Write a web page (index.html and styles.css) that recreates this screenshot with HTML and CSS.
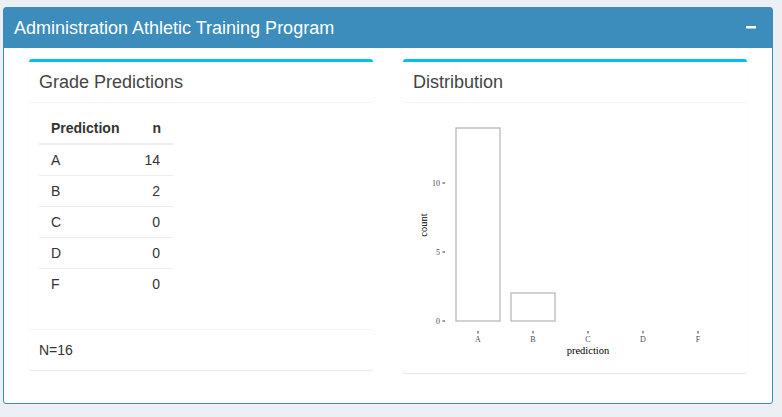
FILE: index.html
```html
<!DOCTYPE html>
<html>
<head>
<meta charset="utf-8">
<link rel="stylesheet" href="styles.css">
</head>
<body>
<div class="box">
  <div class="box-header">
    <h3 class="box-title">Administration Athletic Training Program</h3>
    <span class="box-tool"><svg width="10" height="3" viewBox="0 0 10 3"><rect x="0" y="0" width="10" height="2.5" fill="#fff"/></svg></span>
  </div>
  <div class="box-body">
    <div class="row">
      <div class="col">
        <div class="card">
          <div class="card-header"><h3>Grade Predictions</h3></div>
          <div class="card-body">
            <table class="gt">
              <thead>
                <tr><th class="l">Prediction</th><th class="r">n</th></tr>
              </thead>
              <tbody>
                <tr><td class="l">A</td><td class="r">14</td></tr>
                <tr><td class="l">B</td><td class="r">2</td></tr>
                <tr><td class="l">C</td><td class="r">0</td></tr>
                <tr><td class="l">D</td><td class="r">0</td></tr>
                <tr><td class="l">F</td><td class="r">0</td></tr>
              </tbody>
            </table>
          </div>
          <div class="card-footer">N=16</div>
        </div>
      </div>
      <div class="col">
        <div class="card">
          <div class="card-header"><h3>Distribution</h3></div>
          <div class="card-body">
            <svg class="plot" width="324" height="250" viewBox="0 0 324 250">
              <g fill="#fff" stroke="#bebebe" stroke-width="1.4">
                <rect x="43" y="15" width="44" height="193"/>
                <rect x="98" y="180" width="44" height="28"/>
              </g>
              <g class="ticks" stroke="#333" stroke-width="1">
                <line x1="29.5" y1="70" x2="32" y2="70"/>
                <line x1="29.5" y1="139" x2="32" y2="139"/>
                <line x1="29.5" y1="208" x2="32" y2="208"/>
                <line x1="65" y1="218" x2="65" y2="220.5"/>
                <line x1="120" y1="218" x2="120" y2="220.5"/>
                <line x1="175" y1="218" x2="175" y2="220.5"/>
                <line x1="230" y1="218" x2="230" y2="220.5"/>
                <line x1="285" y1="218" x2="285" y2="220.5"/>
              </g>
              <g class="tick-label" text-anchor="end">
                <text x="27" y="72.8">10</text>
                <text x="27" y="141.8">5</text>
                <text x="27" y="210.8">0</text>
              </g>
              <g class="tick-label" text-anchor="middle">
                <text x="65" y="228.5">A</text>
                <text x="120" y="228.5">B</text>
                <text x="175" y="228.5">C</text>
                <text x="230" y="228.5">D</text>
                <text x="285" y="228.5">F</text>
              </g>
              <text class="axis-title" x="175" y="241" text-anchor="middle">prediction</text>
              <text class="axis-title" transform="translate(14 112) rotate(-90)" text-anchor="middle">count</text>
            </svg>
          </div>
        </div>
      </div>
    </div>
  </div>
</div>
</body>
</html>
```

FILE: styles.css
```css
* { box-sizing: border-box; }

body {
  margin: 0;
  padding: 7px 0 0 3px;
  background: #ecf0f5;
  font-family: "Liberation Sans", Arial, sans-serif;
  font-size: 14px;
  color: #333;
}

.box {
  width: 770px;
  background: #fff;
  border: 1px solid #3c8dbc;
  border-radius: 3px;
}

.box-header {
  background: #3c8dbc;
  color: #fff;
  height: 40px;
  padding: 0 16px 0 10px;
  display: flex;
  align-items: center;
  justify-content: space-between;
}

.box-title {
  margin: 0;
  font-size: 18px;
  font-weight: normal;
  line-height: 20px;
}

.box-tool {
  display: flex;
  align-items: center;
  margin-top: -1px;
}

.box-body {
  padding: 11px 10px 10px;
}

.row {
  display: flex;
  align-items: flex-start;
}

.col {
  width: 374px;
  padding: 0 15px;
}

.card {
  background: #fff;
  border-top: 3px solid #00c0ef;
  border-radius: 3px;
  box-shadow: 0 1px 1px rgba(0, 0, 0, 0.1);
  margin-bottom: 20px;
}

.card-header {
  padding: 10px;
  border-bottom: 1px solid #f4f4f4;
}

.card-header h3 {
  margin: 0;
  font-size: 18px;
  font-weight: normal;
  line-height: 20px;
  color: #444;
}

.card-body {
  padding: 10px;
}

.card-footer {
  border-top: 1px solid #f4f4f4;
  padding: 10px;
  line-height: 20px;
  color: #333;
}

.gt {
  border-collapse: collapse;
  margin-bottom: 20px;
  color: #333;
}

.gt th,
.gt td {
  padding: 5px 12px;
  line-height: 20px;
}

.gt th {
  font-weight: bold;
  font-size: 14px;
  border-bottom: 2px solid #ededed;
}

.gt td.r {
  padding-right: 13px;
  padding-left: 13px;
}

.gt tbody tr + tr td {
  border-top: 1px solid #ededed;
}

.gt .l { text-align: left; }
.gt .r { text-align: right; }

.plot {
  display: block;
}

.tick-label {
  font-family: "Liberation Serif", "Times New Roman", serif;
  font-size: 8px;
  fill: #4d4d4d;
}

.axis-title {
  font-family: "Liberation Serif", "Times New Roman", serif;
  font-size: 10.5px;
  fill: #000;
}
```
